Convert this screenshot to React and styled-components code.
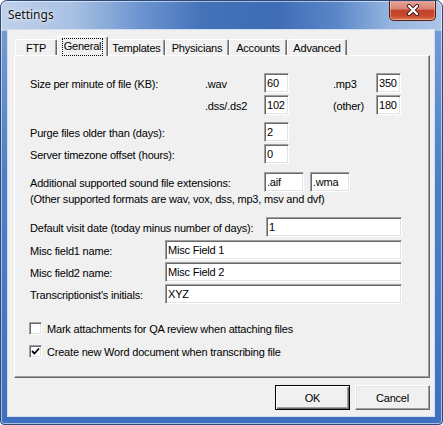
import React from "react";
import styled, { createGlobalStyle, css } from "styled-components";

const GlobalStyle = createGlobalStyle`
  html, body {
    margin: 0;
    padding: 0;
    background: #ffffff;
  }
  body {
    font-family: "Liberation Sans", Arial, sans-serif;
    font-size: 11px;
    letter-spacing: -0.2px;
    color: #000;
  }
`;

const Window = styled.div`
  width: 443px;
  height: 425px;
  box-sizing: border-box;
  border: 1px solid #2b4a7a;
  border-radius: 7px 7px 4px 4px;
  display: flex;
  flex-direction: column;
  overflow: hidden;
  background:
    linear-gradient(
        90deg,
        #bfd1ea 0%,
        #a9c1e3 16%,
        #6b93cf 32%,
        #4372b9 46%,
        #3e6cb5 62%,
        #5a86c8 76%,
        #95b4de 88%,
        #aec6e7 100%
      )
      top / 100% 30px no-repeat,
    linear-gradient(180deg, #7aa0d6 0%, #4f80c6 40%, #3f70c0 100%);
  box-shadow: inset 0 0 0 1px rgba(255, 255, 255, 0.55);
`;

const TitleBar = styled.div`
  height: 28px;
  flex: none;
  display: flex;
  align-items: flex-start;
`;

const Title = styled.div`
  padding: 6px 0 0 7px;
  font-family: "Noto Sans", "Open Sans", sans-serif;
  font-size: 12px;
  letter-spacing: 0;
  line-height: 16px;
  color: #111;
  text-shadow: 0 0 6px rgba(255, 255, 255, 0.9), 0 0 3px rgba(255, 255, 255, 0.8);
`;

const CloseButton = styled.div`
  width: 47px;
  height: 21px;
  margin: -1px 6px 0 auto;
  box-sizing: border-box;
  border: 1px solid #5c1d14;
  border-top: none;
  border-radius: 0 0 5px 5px;
  display: flex;
  align-items: center;
  justify-content: center;
  background: linear-gradient(
    180deg,
    #e7aa9e 0%,
    #d88272 45%,
    #c2412a 52%,
    #c84a2e 80%,
    #de7a52 100%
  );
  box-shadow: inset 0 0 0 1px rgba(255, 255, 255, 0.35);
`;

const Client = styled.div`
  flex: 1;
  margin: 0 7px 7px 6px;
  border: 1px solid #d3dff0;
  background: #f0f0f0;
  display: flex;
  flex-direction: column;
  padding: 6px 4px 6px 6px;
`;

const TabStrip = styled.div`
  height: 19px;
  display: flex;
  align-items: flex-end;
  padding-left: 1px;
`;

const Tab = styled.div`
  width: ${({ $w }) => $w}px;
  height: 16px;
  box-sizing: border-box;
  border: 1px solid;
  border-color: #ffffff #696969 transparent #ffffff;
  border-bottom: none;
  border-radius: 2px 2px 0 0;
  box-shadow: inset -1px 0 0 #a0a0a0;
  background: #f0f0f0;
  display: flex;
  align-items: center;
  justify-content: center;
  line-height: 13px;
  padding-top: 1px;
  ${({ $active }) =>
    $active &&
    css`
      height: 20px;
      margin-bottom: -1px;
      position: relative;
      z-index: 1;
      align-items: flex-start;
      padding-top: 1px;
    `}
`;

const FocusText = styled.span`
  border: 1px dotted #000;
  padding: 1px 1px 2px;
`;

const Panel = styled.div`
  height: 323px;
  box-sizing: border-box;
  border: 1px solid;
  border-color: #ffffff #696969 #696969 #ffffff;
  box-shadow: inset -1px -1px 0 #a0a0a0;
  padding: 17px 0 0 15px;
  display: flex;
  flex-direction: column;
`;

const SizeGrid = styled.div`
  display: grid;
  grid-template-columns: 175px 59px 25px 44px 43px 25px;
  grid-auto-rows: 20px;
  row-gap: 2px;
  align-items: center;
`;

const Row = styled.div`
  display: flex;
  align-items: center;
  height: ${({ $h }) => $h || 20}px;
  margin-top: ${({ $mt }) => $mt || 0}px;
`;

const Label = styled.span`
  flex: none;
  width: ${({ $w }) => ($w ? `${$w}px` : "auto")};
  white-space: nowrap;
  padding-top: 1px;
`;

const TextBox = styled.input`
  width: ${({ $w }) => $w}px;
  height: 20px;
  box-sizing: border-box;
  margin: 0 ${({ $mr }) => $mr || 0}px 0 0;
  padding: 0 0 0 2px;
  border: 1px solid;
  border-color: #a0a0a0 #ffffff #ffffff #a0a0a0;
  box-shadow: inset 1px 1px 0 #696969, inset -1px -1px 0 #e3e3e3;
  background: #fff;
  font-family: "Liberation Sans", Arial, sans-serif;
  font-size: 11px;
  letter-spacing: -0.2px;
  color: #000;
  outline: none;
`;

const Note = styled.div`
  height: 13px;
  line-height: 13px;
  margin-top: 1px;
  white-space: nowrap;
`;

const CheckRow = styled.label`
  display: flex;
  align-items: center;
  gap: 5px;
  height: 17px;
  margin-top: ${({ $mt }) => $mt}px;
  margin-left: -1px;
`;

const CheckBox = styled.span`
  width: 13px;
  height: 13px;
  box-sizing: border-box;
  border: 1px solid;
  border-color: #a0a0a0 #ffffff #ffffff #a0a0a0;
  box-shadow: inset 1px 1px 0 #696969, inset -1px -1px 0 #e3e3e3;
  background: #fff;
  display: flex;
  align-items: center;
  justify-content: center;
`;

const ButtonRow = styled.div`
  display: flex;
  justify-content: flex-end;
  gap: 5px;
  margin-top: 7px;
`;

const Button = styled.div`
  width: 75px;
  height: 25px;
  box-sizing: border-box;
  display: flex;
  align-items: center;
  justify-content: center;
  border: 1px solid;
  border-color: #ffffff #696969 #696969 #ffffff;
  box-shadow: inset -1px -1px 0 #a0a0a0, inset 1px 1px 0 #e3e3e3;
  background: #f0f0f0;
  ${({ $default }) =>
    $default &&
    css`
      border-color: #000;
      box-shadow: inset 1px 1px 0 #ffffff, inset -1px -1px 0 #696969,
        inset -2px -2px 0 #a0a0a0;
    `}
`;

const tabs = [
  { label: "FTP", w: 42 },
  { label: "General", w: 51, active: true },
  { label: "Templates", w: 57 },
  { label: "Physicians", w: 64 },
  { label: "Accounts", w: 58 },
  { label: "Advanced", w: 60 },
];

const CloseIcon = () => (
  <svg width="14" height="12" viewBox="0 0 14 12">
    <path
      d="M3 2 L11 10 M11 2 L3 10"
      stroke="#4a1a12"
      strokeWidth="4.2"
      strokeLinecap="round"
      fill="none"
    />
    <path
      d="M3 2 L11 10 M11 2 L3 10"
      stroke="#ffffff"
      strokeWidth="2.4"
      strokeLinecap="round"
      fill="none"
    />
  </svg>
);

const Check = () => (
  <svg width="9" height="9" viewBox="0 0 9 9">
    <path d="M1 4 L3.5 6.5 L8 1.5" stroke="#000" strokeWidth="1.8" fill="none" />
  </svg>
);

export default function App() {
  return (
    <>
      <GlobalStyle />
      <Window>
        <TitleBar>
          <Title>Settings</Title>
          <CloseButton>
            <CloseIcon />
          </CloseButton>
        </TitleBar>
        <Client>
          <TabStrip>
            {tabs.map((t) => (
              <Tab key={t.label} $w={t.w} $active={t.active}>
                {t.active ? <FocusText>{t.label}</FocusText> : t.label}
              </Tab>
            ))}
          </TabStrip>
          <Panel>
            <SizeGrid>
              <Label>Size per minute of file (KB):</Label>
              <Label>.wav</Label>
              <TextBox $w={25} value="60" readOnly />
              <span />
              <Label>.mp3</Label>
              <TextBox $w={25} value="350" readOnly />
              <span />
              <Label>.dss/.ds2</Label>
              <TextBox $w={25} value="102" readOnly />
              <span />
              <Label>(other)</Label>
              <TextBox $w={25} value="180" readOnly />
            </SizeGrid>
            <Row $mt={7}>
              <Label $w={234}>Purge files older than (days):</Label>
              <TextBox $w={25} value="2" readOnly />
            </Row>
            <Row $mt={2}>
              <Label $w={234}>Server timezone offset (hours):</Label>
              <TextBox $w={25} value="0" readOnly />
            </Row>
            <Row $mt={8}>
              <Label $w={234}>Additional supported sound file extensions:</Label>
              <TextBox $w={40} $mr={6} value=".aif" readOnly />
              <TextBox $w={40} value=".wma" readOnly />
            </Row>
            <Note>(Other supported formats are wav, vox, dss, mp3, msv and dvf)</Note>
            <Row $mt={11}>
              <Label $w={236}>Default visit date (today minus number of days):</Label>
              <TextBox $w={136} value="1" readOnly />
            </Row>
            <Row $mt={3}>
              <Label $w={135}>Misc field1 name:</Label>
              <TextBox $w={237} value="Misc Field 1" readOnly />
            </Row>
            <Row $mt={2}>
              <Label $w={135}>Misc field2 name:</Label>
              <TextBox $w={237} value="Misc Field 2" readOnly />
            </Row>
            <Row $mt={2}>
              <Label $w={135}>Transcriptionist's initials:</Label>
              <TextBox $w={237} value="XYZ" readOnly />
            </Row>
            <CheckRow $mt={16}>
              <CheckBox />
              <span>Mark attachments for QA review when attaching files</span>
            </CheckRow>
            <CheckRow $mt={6}>
              <CheckBox>
                <Check />
              </CheckBox>
              <span>Create new Word document when transcribing file</span>
            </CheckRow>
          </Panel>
          <ButtonRow>
            <Button $default>OK</Button>
            <Button>Cancel</Button>
          </ButtonRow>
        </Client>
      </Window>
    </>
  );
}
